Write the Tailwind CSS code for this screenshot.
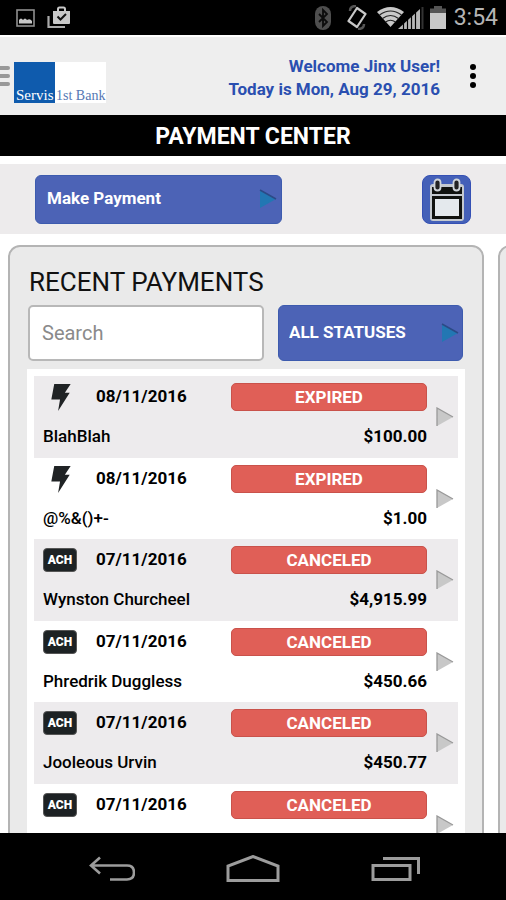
<!DOCTYPE html>
<html lang="en">
<head>
<meta charset="utf-8">
<meta name="viewport" content="width=device-width, initial-scale=1">
<title>Payment Center</title>
<script src="https://cdn.jsdelivr.net/npm/@tailwindcss/browser@4"></script>
</head>
<body class="flex h-screen flex-col overflow-hidden bg-white font-['Roboto',sans-serif] text-black">

<svg class="hidden" aria-hidden="true">
  <symbol id="arrow" viewBox="0 0 18 20">
    <path d="M1 1 L17 10 L1 19 Z" fill="#c8c8c8"/>
    <path d="M1 19 V1 L17 10" fill="none" stroke="#999" stroke-width="1.3"/>
  </symbol>
  <symbol id="arrow-blue" viewBox="0 0 18 20">
    <path d="M1 1 L17 10 L1 19 Z" fill="#2277b3"/>
    <path d="M1 1 L17 10" fill="none" stroke="#2c4a86" stroke-width="1.5"/>
  </symbol>
  <symbol id="bolt" viewBox="0 0 22 30">
    <path d="M4 1 H21 L15 10 H20 L8 29 L10 17 H1 Z" fill="#202325"/>
  </symbol>
</svg>

<div class="flex h-[35px] shrink-0 items-center justify-between bg-black px-2">
  <div class="flex items-center gap-3 pl-2">
    <svg class="h-[18px] w-[19px]" viewBox="0 0 19 18"><rect x="1" y="1" width="17" height="16" fill="none" stroke="#8f8f8f" stroke-width="1.6"/><path d="M3 14.500 V11 Q5 8 7 11 Q9 8 11 11 Q14 9 16 12 V14.500 Z" fill="#c8c8c8"/></svg>
    <svg class="h-[23px] w-[24px]" viewBox="0 0 24 23"><path d="M1.500 10 V21 H18" fill="none" stroke="#aaa" stroke-width="2.200"/><path d="M6 5 H23 V17 Q23 18 22 18 H7 Q6 18 6 17 Z" fill="#c8c8c8"/><path d="M11 5 V3 Q11 1.500 12.500 1.500 H16.500 Q18 1.500 18 3 V5" fill="none" stroke="#c8c8c8" stroke-width="2"/><path d="M10.500 10.500 L13.500 13.500 L19 8" fill="none" stroke="#111" stroke-width="2"/></svg>
  </div>
  <div class="flex items-center">
    <svg class="mr-4 h-[24px] w-[16px]" viewBox="0 0 16 24"><rect width="16" height="24" rx="8" fill="#4e4e4e"/><path d="M4 8 L12 16 L8 20 V4 L12 8 L4 16" fill="none" stroke="#0c0c0c" stroke-width="1.800"/></svg>
    <svg class="mr-2.5 h-[25px] w-[20px]" viewBox="0 0 20 25"><path d="M3 6 Q3 1 9 1 M17 19 Q17 24 11 24" fill="none" stroke="#555" stroke-width="2.500"/><path d="M10 3 L18.500 9 L10 22 L1.500 16 Z" fill="#000" stroke="#c8c8c8" stroke-width="2.200" stroke-linejoin="round"/></svg>
    <svg class="mr-1.5 h-[24px] w-[47px]" viewBox="0 0 47 24"><path d="M0 6 Q13.500 -4 27 6 L13.500 21 Z" fill="#c8c8c8"/><path d="M2.500 9 Q13.500 1 24.500 9 M5.500 12.500 Q13.500 6.500 21.500 12.500 M8.500 16 Q13.500 12.500 18.500 16" fill="none" stroke="#222" stroke-width="1.200"/><path d="M21 23 L43 3 V23 Z" fill="#b8b8b8"/><path d="M26.500 14 V24 M30.500 10 V24 M34.500 7 V24 M38.500 3 V24" stroke="#000" stroke-width="1.200"/><path d="M45.500 1 V23" stroke="#333" stroke-width="2"/></svg>
    <svg class="mr-2 h-[23px] w-[16px]" viewBox="0 0 16 23"><path d="M0 2.500 H4 V0 H12 V2.500 H16 V7 H0 Z" fill="#555"/><rect y="7" width="16" height="16" fill="#c8c8c8"/></svg>
    <span class="text-[23px] leading-6 text-[#b4b4b4]">3:54</span>
  </div>
</div>

<header class="mt-0.5 flex h-[78px] shrink-0 items-center bg-[#eee]">
  <button class="flex w-[14px] flex-col gap-1" aria-label="Open menu">
    <span class="h-1 w-[10px] rounded-r-full bg-[#999]"></span>
    <span class="h-1 w-[10px] rounded-r-full bg-[#999]"></span>
    <span class="h-1 w-[10px] rounded-r-full bg-[#999]"></span>
  </button>
  <a href="#" aria-label="Servis 1st Bank home" class="mt-3">
    <svg class="h-[41px] w-[92px]" viewBox="0 0 92 41">
      <rect width="92" height="41" fill="#fff"/><rect width="41" height="41" fill="#0f5bad"/>
      <g font-family="Liberation Serif, serif" font-size="15"><text x="2" y="38" fill="#fff">Servis</text><text x="42" y="38" font-size="14" fill="#5678b4">1st Bank</text></g>
    </svg>
  </a>
  <div class="flex-1 pt-1 text-right text-[17px] leading-[23px] font-bold text-[#2a4fb0]">
    <p>Welcome Jinx User!</p>
    <p>Today is Mon, Aug 29, 2016</p>
  </div>
  <button class="mr-[21px] ml-[21px] flex w-6 flex-col items-center gap-[3px]" aria-label="More options">
    <span class="size-[6px] rounded-full bg-black"></span>
    <span class="size-[6px] rounded-full bg-black"></span>
    <span class="size-[6px] rounded-full bg-black"></span>
  </button>
</header>

<h1 class="h-[41px] shrink-0 bg-black text-center text-[23px] leading-[43px] font-bold text-white">PAYMENT CENTER</h1>

<div class="mt-2 flex h-[70px] shrink-0 items-center justify-between bg-[#edebec] px-[35px]">
  <button class="flex h-[49px] w-[247px] items-center justify-between rounded-md border border-[#3d5bae] bg-[#4c63b6] pr-1 pl-[11px] text-[17px] font-bold text-white">
    <span>Make Payment</span>
    <svg class="h-5 w-[18px]"><use href="#arrow-blue"/></svg>
  </button>
  <button class="flex size-[49px] items-center justify-center rounded-lg border border-[#3550b4] bg-[#4460b8]" aria-label="Calendar">
    <svg class="h-[43px] w-[36px]" viewBox="0 0 36 43">
      <rect x="1" y="6" width="34" height="37" rx="3" fill="#c4c9cf"/>
      <path d="M3 9 H33 V16 H3 Z M3 18 H33 V41 H3 Z" fill="#10120f"/>
      <rect x="6" y="21" width="24" height="17" fill="#e4e9ed"/>
      <rect x="5.500" y="1.500" width="6" height="11" rx="3" fill="#222" stroke="#d0d5da" stroke-width="1.800"/>
      <rect x="24.500" y="1.500" width="6" height="11" rx="3" fill="#222" stroke="#d0d5da" stroke-width="1.800"/>
    </svg>
  </button>
</div>

<main class="flex min-h-0 flex-1 gap-[14px] overflow-hidden pt-[11px] pl-2">
  <section class="h-[700px] w-[calc(100%-22px)] shrink-0 rounded-xl border-2 border-[#b4b4b4] bg-[#eaeaea] px-[17px] pt-[18px]">
    <h2 class="pl-0.5 text-[26px] leading-[34px] text-[#111]">RECENT PAYMENTS</h2>
    <div class="mt-1.5 grid grid-cols-[236fr_185fr] gap-[14px] pr-0.5 pl-px">
      <input type="search" placeholder="Search" aria-label="Search payments" class="h-[56px] w-full min-w-0 rounded-[5px] border-2 border-[#b8b8b8] bg-white px-3 text-xl placeholder:text-[#8a8a8a]">
      <div class="relative min-w-0">
        <select aria-label="Payment status" class="h-[56px] w-full appearance-none rounded-md border border-[#3d5bae] bg-[#4c63b6] px-[10px] text-[17px] font-bold text-white">
          <option>ALL STATUSES</option><option>EXPIRED</option><option>CANCELED</option>
        </select>
        <svg class="pointer-events-none absolute top-[18px] right-1 h-5 w-[18px]"><use href="#arrow-blue"/></svg>
      </div>
    </div>
    <ul id="payments" class="mt-2 bg-white px-[7px] pt-[7px]"></ul>
  </section>
  <section class="h-[700px] w-[calc(100%-22px)] shrink-0 rounded-xl border-2 border-[#b4b4b4] bg-[#eaeaea]"></section>
</main>

<nav class="flex h-[67px] shrink-0 items-center justify-center gap-[91px] bg-black pt-1">
  <button aria-label="Back"><svg class="h-[26px] w-[50px]" viewBox="0 0 50 26" fill="none" stroke="#9c9c9c" stroke-width="2.600"><path d="M15 1.500 L6 9.500 L15 17.500 M6 9.500 H42 Q49 9.500 49 16.500 Q49 23.500 42 23.500 H25"/></svg></button>
  <button aria-label="Home"><svg class="h-[28px] w-[54px]" viewBox="0 0 54 28" fill="none" stroke="#9c9c9c" stroke-width="3"><path d="M2 25.500 V11 L27 1.500 L52 11 V25.500 Z"/></svg></button>
  <button aria-label="Recent apps"><svg class="h-[26px] w-[50px]" viewBox="0 0 50 26" fill="none" stroke="#9c9c9c" stroke-width="3"><rect x="2" y="9.500" width="37" height="14"/><path d="M12 2.500 H47.500 V18"/></svg></button>
</nav>

<script>
const payments = [
  ["bolt", "08/11/2016", "EXPIRED", "BlahBlah", "$100.00"],
  ["bolt", "08/11/2016", "EXPIRED", "@%&()+-", "$1.00"],
  ["ach", "07/11/2016", "CANCELED", "Wynston Churcheel", "$4,915.99"],
  ["ach", "07/11/2016", "CANCELED", "Phredrik Duggless", "$450.66"],
  ["ach", "07/11/2016", "CANCELED", "Jooleous Urvin", "$450.77"],
  ["ach", "07/11/2016", "CANCELED", "", ""]
];
const icons = {
  bolt: '<svg class="ml-[7px] h-[29px] w-[22px]"><use href="#bolt"/></svg>',
  ach: '<span class="flex h-6 w-[34px] items-center justify-center rounded border border-[#555] bg-[#1d2224] text-xs font-black text-white">ACH</span>'
};
document.getElementById("payments").innerHTML = payments.map(([type, date, status, name, amount]) => `
  <li class="odd:h-[82px] even:h-[81px] odd:bg-[#edebed]">
    <a href="#" class="flex h-full items-center pr-1 pl-[9px]">
      <div class="flex h-full flex-1 flex-col pt-[7px]">
        <div class="flex h-7 items-center">
          <div class="w-[53px]">${icons[type]}</div>
          <span class="flex-1 text-[17px] font-bold">${date}</span>
          <span class="h-7 w-[196px] rounded-[5px] border border-[#c9524b] bg-[#e05f57] text-center text-[17px] leading-[27px] font-bold text-white">${status}</span>
        </div>
        <div class="mt-[15px] flex justify-between text-[17px] leading-5"><span class="font-medium">${name}</span><span class="font-bold">${amount}</span></div>
      </div>
      <svg class="ml-[9px] h-5 w-[18px]"><use href="#arrow"/></svg>
    </a>
  </li>`).join("");
</script>
</body>
</html>
